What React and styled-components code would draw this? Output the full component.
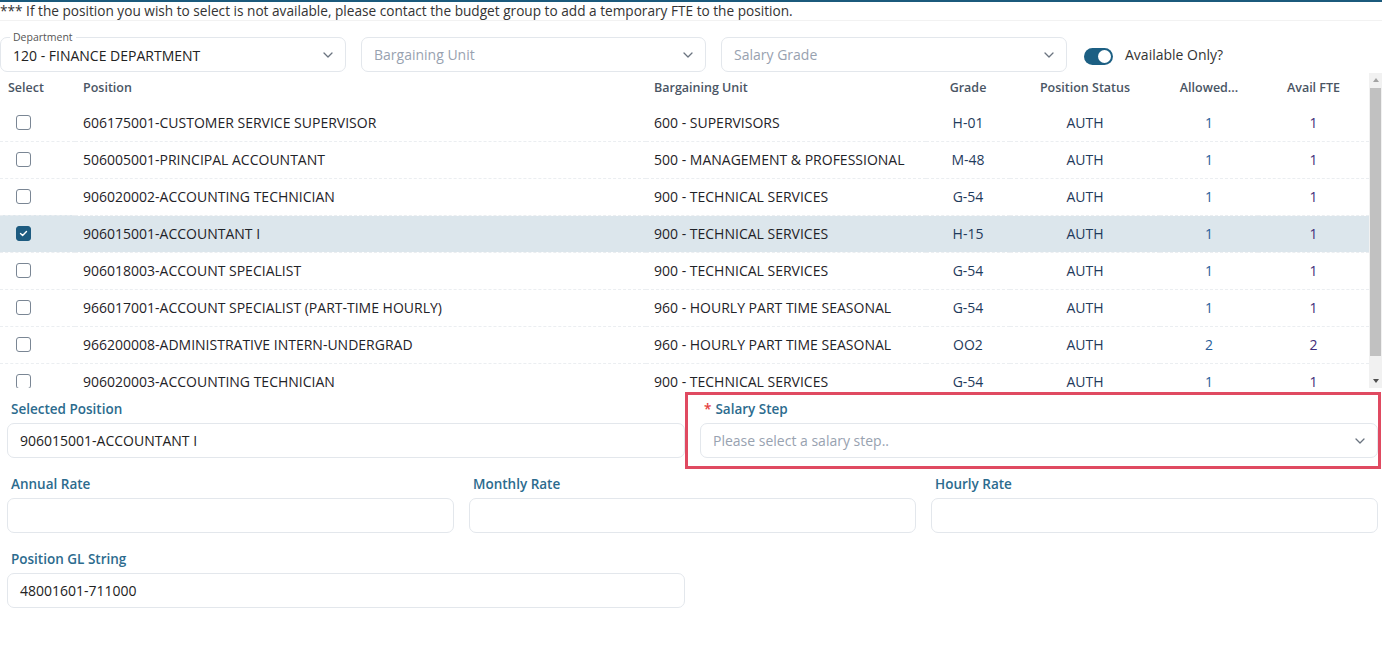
import React from "react";
import styled, { createGlobalStyle } from "styled-components";

const GlobalStyle = createGlobalStyle`
  html, body {
    margin: 0;
    padding: 0;
    background: #ffffff;
  }
  body {
    font-family: "Open Sans", "Liberation Sans", sans-serif;
    color: #212529;
    font-size: 14px;
  }
  * {
    box-sizing: border-box;
  }
`;

const positions = [
  { id: "606175001-CUSTOMER SERVICE SUPERVISOR", unit: "600 - SUPERVISORS", grade: "H-01", allowed: 1, avail: 1 },
  { id: "506005001-PRINCIPAL ACCOUNTANT", unit: "500 - MANAGEMENT & PROFESSIONAL", grade: "M-48", allowed: 1, avail: 1 },
  { id: "906020002-ACCOUNTING TECHNICIAN", unit: "900 - TECHNICAL SERVICES", grade: "G-54", allowed: 1, avail: 1 },
  { id: "906015001-ACCOUNTANT I", unit: "900 - TECHNICAL SERVICES", grade: "H-15", allowed: 1, avail: 1, selected: true },
  { id: "906018003-ACCOUNT SPECIALIST", unit: "900 - TECHNICAL SERVICES", grade: "G-54", allowed: 1, avail: 1 },
  { id: "966017001-ACCOUNT SPECIALIST (PART-TIME HOURLY)", unit: "960 - HOURLY PART TIME SEASONAL", grade: "G-54", allowed: 1, avail: 1 },
  { id: "966200008-ADMINISTRATIVE INTERN-UNDERGRAD", unit: "960 - HOURLY PART TIME SEASONAL", grade: "OO2", allowed: 2, avail: 2 },
  { id: "906020003-ACCOUNTING TECHNICIAN", unit: "900 - TECHNICAL SERVICES", grade: "G-54", allowed: 1, avail: 1 },
];

const Page = styled.div`
  border-top: 2px solid #1b5a7c;
`;

const Notice = styled.div`
  height: 19px;
  line-height: 17px;
  font-size: 13.65px;
  color: #333;
  border-bottom: 1px solid #f2f2f2;
  white-space: nowrap;
`;

const FilterBar = styled.div`
  display: grid;
  grid-template-columns: 346px 345px 346px auto;
  column-gap: 15px;
  align-items: center;
  margin-top: 16px;
`;

const SelectBox = styled.div`
  position: relative;
  height: 35px;
  border: 1px solid #e3e7ec;
  border-radius: 7px;
  display: flex;
  align-items: center;
  justify-content: space-between;
  padding: 0 12px;
  background: #fff;
`;

const FloatLabel = styled.span`
  position: absolute;
  top: -8px;
  left: 9px;
  padding: 0 3px;
  background: #fff;
  font-size: 10.5px;
  line-height: 14px;
  color: #555;
`;

const SelectValue = styled.span`
  font-size: 14px;
  color: ${(p) => (p.$placeholder ? "#98a2b0" : "#222")};
  padding-top: ${(p) => (p.$floated ? 1 : 0)}px;
`;

const ToggleWrap = styled.div`
  display: flex;
  align-items: center;
  gap: 12px;
  padding-left: 2px;
  font-size: 14px;
  color: #333;
`;

const Track = styled.span`
  position: relative;
  width: 29px;
  height: 17px;
  border-radius: 9px;
  background: #1c5f83;
  margin-top: 3px;
`;

const Knob = styled.span`
  position: absolute;
  top: 2px;
  right: 2px;
  width: 13px;
  height: 13px;
  border-radius: 50%;
  background: #fff;
`;

const TableArea = styled.div`
  display: flex;
  height: 315px;
  margin-top: 1px;
`;

const Viewport = styled.div`
  flex: 1;
  overflow: hidden;
`;

const ScrollBar = styled.div`
  width: 13px;
  background: #f1f1f1;
  display: flex;
  flex-direction: column;
  align-items: center;
`;

const Arrow = styled.span`
  flex: none;
  width: 13px;
  height: 14px;
  display: flex;
  align-items: center;
  justify-content: center;
  &::before {
    content: "";
    border-left: 3.5px solid transparent;
    border-right: 3.5px solid transparent;
    ${(p) =>
      p.$down
        ? "border-top: 4px solid #505050;"
        : "border-bottom: 4px solid #a3a3a3;"}
  }
`;

const Thumb = styled.span`
  flex: none;
  width: 11px;
  height: 268px;
  margin-top: 1px;
  background: #c1c1c1;
`;

const Spacer = styled.span`
  flex: 1;
`;

const Table = styled.table`
  width: 100%;
  border-collapse: collapse;
  table-layout: fixed;
`;

const Th = styled.th`
  background: #fff;
  height: 31px;
  padding: 0 8px 2px;
  font-size: 12.5px;
  font-weight: 600;
  color: #4a5564;
  text-align: ${(p) => p.$align || "left"};
  white-space: nowrap;
`;

const Tr = styled.tr`
  background: ${(p) => (p.$selected ? "#dce6ec" : "#fff")};
  border-bottom: 1px dashed #ebeef1;
`;

const Td = styled.td`
  height: 37px;
  padding: 0 8px;
  font-size: 14px;
  color: ${(p) => p.$color || "#1f2328"};
  text-align: ${(p) => p.$align || "left"};
  white-space: nowrap;
  overflow: hidden;
`;

const CheckCell = styled.td`
  height: 37px;
  padding: 0 0 0 16px;
`;

const Check = styled.span`
  display: flex;
  align-items: center;
  justify-content: center;
  width: 15px;
  height: 15px;
  border-radius: 3px;
  border: 1.5px solid ${(p) => (p.$checked ? "#1d5b80" : "#7a8694")};
  background: ${(p) => (p.$checked ? "#1d5b80" : "#fff")};
`;

const Form = styled.div`
  display: flex;
  flex-direction: column;
  gap: 16px;
  padding: 11px 4px 0 7px;
`;

const FormRow = styled.div`
  display: grid;
  grid-template-columns: repeat(${(p) => p.$cols}, 1fr);
  column-gap: 15px;
`;

const Field = styled.div`
  position: relative;
  display: flex;
  flex-direction: column;
  gap: 4px;
`;

const Highlight = styled.span`
  position: absolute;
  top: -7px;
  bottom: -11px;
  left: -15px;
  right: -3px;
  border: 3px solid #e04a61;
  pointer-events: none;
  z-index: 2;
`;

const Label = styled.label`
  height: 20px;
  line-height: 20px;
  font-size: 13.5px;
  font-weight: 600;
  color: #2c6b8e;
  padding-left: 4px;
`;

const Required = styled.span`
  color: #e53e3e;
  margin-right: 4px;
`;

const InputBox = styled.div`
  height: 35px;
  border: 1px solid #e3e7ec;
  border-radius: 7px;
  display: flex;
  align-items: center;
  justify-content: space-between;
  padding: 0 12px;
  font-size: 14px;
  color: ${(p) => (p.$placeholder ? "#98a2b0" : "#222")};
`;

const Chevron = () => (
  <svg width="10" height="6" viewBox="0 0 10 6" fill="none">
    <polyline points="1,1 5,5 9,1" stroke="#6b7480" strokeWidth="1.3" strokeLinecap="round" strokeLinejoin="round" />
  </svg>
);

const Tick = () => (
  <svg width="9" height="7" viewBox="0 0 9 7" fill="none">
    <polyline points="1.5,3.6 3.6,5.5 7.5,1.5" stroke="#fff" strokeWidth="1.4" strokeLinecap="round" strokeLinejoin="round" />
  </svg>
);

const Select = ({ label, value, placeholder }) => (
  <SelectBox>
    {label && <FloatLabel>{label}</FloatLabel>}
    <SelectValue $placeholder={!value} $floated={!!label}>{value || placeholder}</SelectValue>
    <Chevron />
  </SelectBox>
);

export default function App() {
  return (
    <Page>
      <GlobalStyle />
      <Notice>
        *** If the position you wish to select is not available, please contact the budget group to add a temporary FTE to the position.
      </Notice>
      <FilterBar>
        <Select label="Department" value="120 - FINANCE DEPARTMENT" />
        <Select placeholder="Bargaining Unit" />
        <Select placeholder="Salary Grade" />
        <ToggleWrap>
          <Track>
            <Knob />
          </Track>
          Available Only?
        </ToggleWrap>
      </FilterBar>
      <TableArea>
        <Viewport>
          <Table>
            <colgroup>
              <col style={{ width: 75 }} />
              <col style={{ width: 571 }} />
              <col style={{ width: 280 }} />
              <col style={{ width: 84 }} />
              <col style={{ width: 150 }} />
              <col style={{ width: 98 }} />
              <col />
            </colgroup>
            <thead>
              <tr>
                <Th>Select</Th>
                <Th>Position</Th>
                <Th>Bargaining Unit</Th>
                <Th $align="center">Grade</Th>
                <Th $align="center">Position Status</Th>
                <Th $align="center">Allowed...</Th>
                <Th $align="center">Avail FTE</Th>
              </tr>
            </thead>
            <tbody>
              {positions.map((p) => (
                <Tr key={p.id} $selected={p.selected}>
                  <CheckCell>
                    <Check $checked={p.selected}>{p.selected && <Tick />}</Check>
                  </CheckCell>
                  <Td>{p.id}</Td>
                  <Td>{p.unit}</Td>
                  <Td $align="center" $color="#1f3b5c">{p.grade}</Td>
                  <Td $align="center" $color="#1f3b5c">AUTH</Td>
                  <Td $align="center" $color="#2a5f9a">{p.allowed}</Td>
                  <Td $align="center" $color="#3f2d7a">{p.avail}</Td>
                </Tr>
              ))}
            </tbody>
          </Table>
        </Viewport>
        <ScrollBar>
          <Arrow />
          <Thumb />
          <Spacer />
          <Arrow $down />
        </ScrollBar>
      </TableArea>
      <Form>
        <FormRow $cols={2}>
          <Field>
            <Label>Selected Position</Label>
            <InputBox>906015001-ACCOUNTANT I</InputBox>
          </Field>
          <Field>
            <Highlight />
            <Label>
              <Required>*</Required>Salary Step
            </Label>
            <InputBox $placeholder>
              Please select a salary step..
              <Chevron />
            </InputBox>
          </Field>
        </FormRow>
        <FormRow $cols={3}>
          <Field>
            <Label>Annual Rate</Label>
            <InputBox />
          </Field>
          <Field>
            <Label>Monthly Rate</Label>
            <InputBox />
          </Field>
          <Field>
            <Label>Hourly Rate</Label>
            <InputBox />
          </Field>
        </FormRow>
        <FormRow $cols={2}>
          <Field>
            <Label>Position GL String</Label>
            <InputBox>48001601-711000</InputBox>
          </Field>
        </FormRow>
      </Form>
    </Page>
  );
}
